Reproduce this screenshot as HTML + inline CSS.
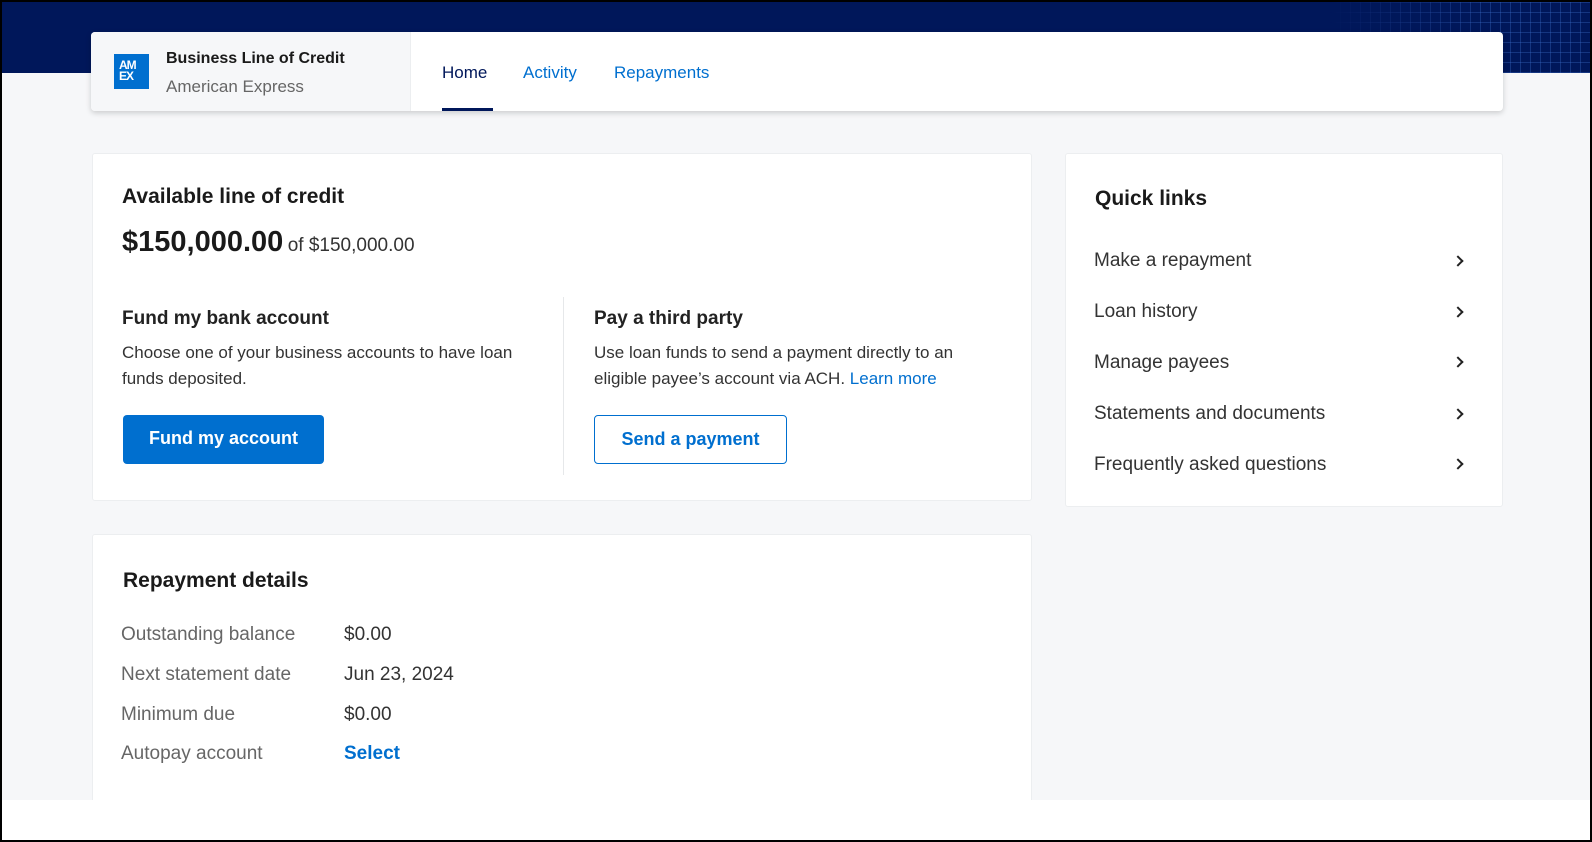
<!DOCTYPE html>
<html><head><meta charset="utf-8"><style>
*{box-sizing:border-box;margin:0;padding:0}
body{width:1592px;height:842px;background:#fff;font-family:"Liberation Sans",sans-serif;color:#1a1a1a;position:relative;overflow:hidden}
.frame{position:absolute;left:0;top:0;width:1592px;height:842px;border:2px solid #000;pointer-events:none;z-index:10}
.page{position:absolute;left:2px;top:2px;width:1588px;height:798px;background:#f6f7f9;overflow:hidden}
.hdr{position:absolute;left:0;top:0;width:1588px;height:71px;background:#00175a}
.grid{position:absolute;right:0;top:0;width:260px;height:71px;background:
repeating-linear-gradient(90deg,rgba(60,110,200,.35) 0 1px,transparent 1px 10px),
repeating-linear-gradient(0deg,rgba(60,110,200,.35) 0 1px,transparent 1px 10px);
-webkit-mask-image:linear-gradient(90deg,transparent,#000 60%);mask-image:linear-gradient(90deg,transparent,#000 60%)}
.nav{position:absolute;left:89px;top:30px;width:1412px;height:79px;background:#fff;border-radius:4px;box-shadow:0 2px 6px rgba(0,0,0,.18);overflow:hidden}
.brand{position:absolute;left:0;top:0;width:320px;height:79px;background:#f6f7f9;border-right:1px solid #eceef0}
.logo{position:absolute;left:23px;top:22px;width:35px;height:35px;background:#006fcf;color:#fff;font-weight:bold;font-size:12px;line-height:11px;padding:6px 0 0 5px;letter-spacing:-1px}
.t1{position:absolute;left:75px;top:18px;font-size:16px;font-weight:bold;color:#1a1a1a}
.t2{position:absolute;left:75px;top:45px;font-size:17px;color:#666}
.tab{position:absolute;top:31px;font-size:17px;color:#006fcf}
.ul{position:absolute;left:351px;top:76px;width:51px;height:3px;background:#00175a}
.card{position:absolute;background:#fff;border:1px solid #eceef0;border-radius:3px}
h2{font-size:21px;font-weight:bold;position:absolute}
.p{position:absolute;font-size:16px;line-height:26px;color:#333}
.btn{position:absolute;height:49px;border-radius:4px;font-size:18px;text-align:center;line-height:47px}
.ql{position:absolute;left:28px;font-size:19px;color:#333}
.chev{position:absolute;left:388px;width:8px;height:8px;border-right:2px solid #222;border-top:2px solid #222;transform:rotate(45deg)}
.lab{position:absolute;left:28px;font-size:19px;color:#666}
.val{position:absolute;left:251px;font-size:19px;color:#333}
</style></head><body>
<div class="page">
<div class="hdr"><div class="grid"></div></div>
<div class="nav">
<div class="brand"><div class="logo">AM<br>EX</div><div class="t1">Business Line of Credit</div><div class="t2">American Express</div></div>
<div class="tab" style="left:351px;color:#00175a">Home</div>
<div class="tab" style="left:432px">Activity</div>
<div class="tab" style="left:523px">Repayments</div>
<div class="ul"></div>
</div>
<div class="card" style="left:90px;top:151px;width:940px;height:348px">
<h2 style="left:29px;top:31px">Available line of credit</h2>
<div style="position:absolute;left:29px;top:72px;white-space:nowrap"><span style="font-size:29px;font-weight:bold">$150,000.00</span> <span style="font-size:19px;color:#333">of $150,000.00</span></div>
<div style="position:absolute;left:29px;top:154px;font-size:19px;font-weight:bold;color:#222">Fund my bank account</div>
<div class="p" style="left:29px;top:186px;width:412px;font-size:17px">Choose one of your business accounts to have loan funds deposited.</div>
<div class="btn" style="left:30px;top:261px;width:201px;background:#006fcf;color:#fff;font-weight:bold">Fund my account</div>
<div style="position:absolute;left:470px;top:143px;width:1px;height:178px;background:#e6e8ea"></div>
<div style="position:absolute;left:501px;top:154px;font-size:19px;font-weight:bold;color:#222">Pay a third party</div>
<div class="p" style="left:501px;top:186px;width:385px;font-size:17px">Use loan funds to send a payment directly to an eligible payee’s account via ACH. <span style="color:#006fcf">Learn more</span></div>
<div class="btn" style="left:501px;top:261px;width:193px;border:1px solid #006fcf;color:#006fcf;font-weight:bold">Send a payment</div>
</div>
<div class="card" style="left:90px;top:532px;width:940px;height:320px">
<h2 style="left:30px;top:34px">Repayment details</h2>
<div class="lab" style="top:89px">Outstanding balance</div><div class="val" style="top:89px">$0.00</div>
<div class="lab" style="top:129px">Next statement date</div><div class="val" style="top:129px">Jun 23, 2024</div>
<div class="lab" style="top:169px">Minimum due</div><div class="val" style="top:169px">$0.00</div>
<div class="lab" style="top:208px">Autopay account</div><div class="val" style="top:208px;color:#006fcf;font-weight:bold">Select</div>
</div>
<div class="card" style="left:1063px;top:151px;width:438px;height:354px">
<h2 style="left:29px;top:33px">Quick links</h2>
<div class="ql" style="top:96px">Make a repayment</div><div class="chev" style="top:103px"></div>
<div class="ql" style="top:147px">Loan history</div><div class="chev" style="top:154px"></div>
<div class="ql" style="top:198px">Manage payees</div><div class="chev" style="top:204px"></div>
<div class="ql" style="top:249px">Statements and documents</div><div class="chev" style="top:256px"></div>
<div class="ql" style="top:300px">Frequently asked questions</div><div class="chev" style="top:306px"></div>
</div>
</div>
<div class="frame"></div>
</body></html>
